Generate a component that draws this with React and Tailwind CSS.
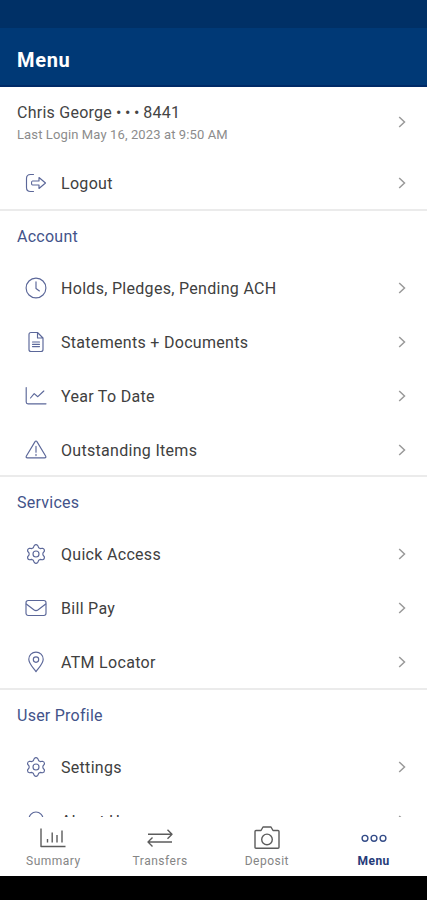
import React from "react";

const paths = {
  logout: (
    <>
      <path d="M8.5 2.5H5.5Q1.5 2.5 1.5 6.5V15.5Q1.5 19.5 5.5 19.5H8.5" />
      <path d="M7.5 9H14V5.5L20.5 11L14 16.5V13H7.5Q6.5 13 6.5 11T7.5 9Z" />
    </>
  ),
  clock: (
    <>
      <circle cx="11" cy="11" r="9.9" />
      <path d="M11 4.8V11.5L14.4 14" />
    </>
  ),
  document: (
    <>
      <path d="M12.5 1.5H6Q4 1.5 4 3.5V18.5Q4 20.5 6 20.5H16Q18 20.5 18 18.5V7L12.5 1.5V7H18" />
      <path d="M7.5 11H14.5M7.5 13.3H14.5M7.5 15.6H14.5" />
    </>
  ),
  chart: (
    <>
      <path d="M1.2 2.5V17Q1.2 18.8 3 18.8H21" />
      <path d="M5.5 13L9.2 8.6L12.8 11.7L18.8 6" />
    </>
  ),
  warning: (
    <>
      <path d="M9.9 2.9Q11 1 12.1 2.9L20.6 17Q21.5 18.8 19.6 18.8H2.4Q.5 18.8 1.4 17Z" />
      <path d="M11 7.3V13.2M11 15.2V16.6" />
    </>
  ),
  gear: (
    <>
      <path d="M9.2 2.6Q11 .6 12.8 2.6L13.7 4.8L15.1 5.6L17.5 5.2Q19.7 5.6 19.4 8.1L17.9 10.2V11.8L19.4 13.9Q19.7 16.4 17.5 16.8L15.1 16.4L13.7 17.2L12.8 19.4Q11 21.4 9.2 19.4L8.3 17.2L6.9 16.4L4.5 16.8Q2.3 16.4 2.6 13.9L4.1 11.8V10.2L2.6 8.1Q2.3 5.6 4.5 5.2L6.9 5.6L8.3 4.8Z" />
      <circle cx="11" cy="11" r="3" />
    </>
  ),
  mail: (
    <>
      <rect x="1" y="3.5" width="20" height="15" rx="2.2" />
      <path d="M1.3 7L8.8 12.8Q11 14.3 13.2 12.8L20.7 7" />
    </>
  ),
  pin: (
    <>
      <path d="M11 20.7C9 17.5 3.8 13 3.8 8.3A7.2 7.2 0 0 1 18.2 8.3C18.2 13 13 17.5 11 20.7Z" />
      <circle cx="11" cy="8.6" r="2.7" />
    </>
  ),
  about: <circle cx="11" cy="9" r="7" />,
};

function Icon({ name }) {
  return (
    <svg
      className="h-[22px] w-[22px] shrink-0 text-[#5b6799]"
      viewBox="0 0 22 22"
      fill="none"
      stroke="currentColor"
      strokeWidth="1.15"
      strokeLinejoin="round"
      strokeLinecap="round"
    >
      {paths[name]}
    </svg>
  );
}

function Chevron() {
  return (
    <svg className="h-3 w-2 shrink-0 text-[#9a9a9a]" viewBox="0 0 8 12" fill="none" stroke="currentColor" strokeWidth="1.5">
      <path d="M1.2 1L6.5 6L1.2 11" />
    </svg>
  );
}

function Row({ icon, label }) {
  return (
    <div className="flex h-[54px] shrink-0 items-center pr-[21px] pl-[25px]">
      <Icon name={icon} />
      <span className="ml-3.5 flex-1 pt-px text-base tracking-[0.3px] whitespace-nowrap text-[#404040]">{label}</span>
      <Chevron />
    </div>
  );
}

function Section({ title, className, children }) {
  return (
    <section className={`flex shrink-0 flex-col border-t-2 border-[#ebebeb] ${className}`}>
      <h2 className="flex h-[50px] shrink-0 items-center pt-[2px] pl-[17px] text-base tracking-[0.25px] text-[#43538a]">{title}</h2>
      {children}
    </section>
  );
}

function Tab({ label, active, children }) {
  return (
    <div className={`flex flex-1 flex-col items-center ${active ? "font-bold text-[#263b79]" : "text-[#858585]"}`}>
      <svg
        className={`mt-2 h-[26px] w-[28px] ${active ? "text-[#344c88]" : "text-[#5c5c5c]"}`}
        viewBox="0 0 28 26"
        fill="none"
        stroke="currentColor"
        strokeWidth="1.4"
        strokeLinejoin="round"
      >
        {children}
      </svg>
      <span className="mt-[2px] text-xs leading-4 tracking-[0.5px]">{label}</span>
    </div>
  );
}

export default function App() {
  return (
    <div className="flex h-[900px] w-[427px] flex-col overflow-hidden bg-white font-['Roboto',sans-serif]">
      <div className="h-7 shrink-0 bg-[#003066]" />
      <header className="flex h-[59px] shrink-0 items-center border-b-2 border-[#002a67] bg-[#003976] pt-1.5 pl-[17px]">
        <h1 className="text-xl font-bold tracking-[0.7px] text-white">Menu</h1>
      </header>
      <main className="flex h-[730px] shrink-0 flex-col overflow-hidden">
        <div className="flex h-[69px] shrink-0 items-center pr-[21px] pl-[17px]">
          <div className="flex-1 pt-1">
            <p className="flex text-base leading-[22px] tracking-[0.25px] text-[#444]">
              <span>Chris George</span>
              <span className="ml-[4px] tracking-[-0.2px]">• • •</span>
              <span className="ml-[4px]">8441</span>
            </p>
            <p className="text-[13px] leading-[22px] tracking-[0.12px] text-[#8c8c8c]">Last Login May 16, 2023 at 9:50 AM</p>
          </div>
          <Chevron />
        </div>
        <div className="h-[53px] shrink-0">
          <Row icon="logout" label="Logout" />
        </div>
        <Section title="Account" className="h-[266px]">
          <Row icon="clock" label="Holds, Pledges, Pending ACH" />
          <Row icon="document" label="Statements + Documents" />
          <Row icon="chart" label="Year To Date" />
          <Row icon="warning" label="Outstanding Items" />
        </Section>
        <Section title="Services" className="h-[213px]">
          <Row icon="gear" label="Quick Access" />
          <Row icon="mail" label="Bill Pay" />
          <Row icon="pin" label="ATM Locator" />
        </Section>
        <Section title="User Profile" className="h-[160px]">
          <Row icon="gear" label="Settings" />
          <Row icon="about" label="About Us" />
        </Section>
      </main>
      <nav className="flex h-[59px] shrink-0 bg-white">
        <Tab label="Summary">
          <path d="M2 3.5V21.5H26.5M8.5 14V17.5M13.2 7.5V17.5M18 10V17.5M23 5.5V17.5" />
        </Tab>
        <Tab label="Transfers">
          <path d="M2 9.3H26M21.5 4.8L26 9.3L21.5 13.8M26 17H2M6.5 12.5L2 17L6.5 21.5" />
        </Tab>
        <Tab label="Deposit">
          <path d="M2 22.3V6.5Q2 5.5 3 5.5H8L10 2H18L20 5.5H25Q26 5.5 26 6.5V22.3Q26 23.3 25 23.3H3Q2 23.3 2 22.3Z" />
          <circle cx="14" cy="14.4" r="5.3" />
        </Tab>
        <Tab label="Menu" active>
          <circle cx="5" cy="13.3" r="2.9" />
          <circle cx="14" cy="13.3" r="2.9" />
          <circle cx="23" cy="13.3" r="2.9" />
        </Tab>
      </nav>
      <div className="flex-1 bg-black" />
    </div>
  );
}
